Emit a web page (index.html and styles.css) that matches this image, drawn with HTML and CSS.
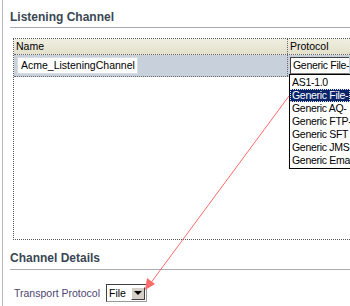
FILE: index.html
```html
<!DOCTYPE html>
<html>
<head>
  <title>Listening Channel</title>
  <link rel="stylesheet" href="styles.css">
</head>
<body>
  <div class="frame">
    <h2 class="section-title first">Listening Channel</h2>

    <div class="grid">
      <div class="grid-head">
        <div class="cell name-col">Name</div>
        <div class="cell proto-col">Protocol</div>
      </div>
      <div class="grid-row selected">
        <div class="cell name-col">
          <span class="textbox">Acme_ListeningChannel</span>
        </div>
        <div class="cell proto-col">
          <span class="selectbox">Generic File-</span>
        </div>
      </div>
      <ul class="droplist">
        <li>AS1-1.0</li>
        <li class="active">Generic File-</li>
        <li>Generic AQ-</li>
        <li>Generic FTP-</li>
        <li>Generic SFT</li>
        <li>Generic JMS</li>
        <li>Generic Ema</li>
      </ul>
    </div>

    <h2 class="section-title second">Channel Details</h2>
    <div class="field">
      <label class="field-label">Transport Protocol</label>
      <span class="combo">
        <span class="combo-text">File</span>
        <span class="combo-btn"><span class="tri"></span></span>
      </span>
    </div>
  </div>

  <!-- annotation arrow -->
  <svg class="pointer" width="350" height="306" viewBox="0 0 350 306">
    <line x1="289" y1="96" x2="150" y2="284" stroke="#ff6b6b" stroke-width="1"/>
    <polygon points="145,290 147,278 155,284" fill="#ff6b6b"/>
  </svg>
</body>
</html>
```

FILE: styles.css
```css
body {
  margin: 0;
  padding: 0;
  width: 350px;
  height: 306px;
  overflow: hidden;
  background-color: #fff;
  font-family: "Liberation Sans", Arial, sans-serif;
  font-size: 10.5px;
  color: #000;
  position: relative;
}

.frame {
  margin-left: 2px;
  border-left: 1px solid #b9b9c1;
  height: 306px;
  padding-left: 7px;
  width: 340px;
}

.section-title {
  margin: 0;
  font-size: 12px;
  font-weight: bold;
  color: #3a4654;
  padding-top: 9px;
  padding-bottom: 4px;
  border-bottom: 1px solid #aaaab2;
  line-height: 14px;
}

.section-title.first {
  padding-top: 10px;
  padding-bottom: 3px;
}

.section-title.second {
  padding-top: 11px;
  padding-bottom: 4px;
}

.grid {
  position: relative;
  margin: 10px 0 0 3px;
  height: 200px;
  border: 1px dotted #555;
  border-right: none;
}

.grid-head {
  display: flex;
  height: 15px;
  background: linear-gradient(#f0eee0, #e3e1cb);
  border-bottom: 1px dotted #666;
}

.grid-row {
  display: flex;
  height: 21px;
  border-bottom: 1px dotted #666;
}

.grid-row.selected {
  background-color: #c8d0dc;
}

.cell {
  line-height: 15px;
  padding-left: 2px;
}

.name-col {
  width: 271px;
}

.proto-col {
  flex: 1;
  border-left: 1px dotted #666;
}

.grid-row .cell {
  padding-top: 2px;
}

.textbox {
  display: inline-block;
  width: 116px;
  height: 15px;
  margin-left: 1px;
  padding-left: 3px;
  background-color: #fff;
  border: 1px solid #d8dce4;
  line-height: 15px;
  white-space: nowrap;
}

.selectbox {
  display: inline-block;
  height: 15px;
  padding-left: 2px;
  background-color: #fff;
  border: 1px solid #404040;
  border-right: none;
  border-bottom-color: #7a7a7a;
  line-height: 15px;
  white-space: nowrap;
  letter-spacing: -0.3px;
}

.droplist {
  position: absolute;
  left: 275px;
  top: 35px;
  width: 60px;
  margin: 0;
  padding: 1px 0;
  list-style: none;
  background-color: #fff;
  border: 1px solid #000;
  border-right: none;
  letter-spacing: -0.3px;
}

.droplist li {
  height: 13px;
  line-height: 13px;
  padding-left: 2px;
  white-space: nowrap;
}

.droplist li.active {
  background-color: #0a246a;
  color: #fff;
  outline: 1px dotted #e0e0e0;
  outline-offset: -1px;
}

.field {
  display: flex;
  align-items: center;
  margin: 14px 0 0 4px;
}

.field-label {
  color: #4d4470;
  margin-right: 6px;
}

.combo {
  display: flex;
  align-items: center;
  height: 14px;
  padding: 1px;
  border: 1px solid #404040;
  border-right-color: #999;
  border-bottom-color: #999;
  background-color: #fff;
}

.combo-text {
  width: 22px;
  padding-left: 1px;
  line-height: 14px;
}

.combo-btn {
  display: flex;
  align-items: center;
  justify-content: center;
  width: 14px;
  height: 13px;
  background-color: #d4d0c8;
  border: 1px solid #fff;
  border-right-color: #404040;
  border-bottom-color: #404040;
  box-sizing: border-box;
}

.tri {
  width: 0;
  height: 0;
  border-left: 4px solid transparent;
  border-right: 4px solid transparent;
  border-top: 4px solid #000;
}

.pointer {
  position: absolute;
  left: 0;
  top: 0;
  pointer-events: none;
}
```
